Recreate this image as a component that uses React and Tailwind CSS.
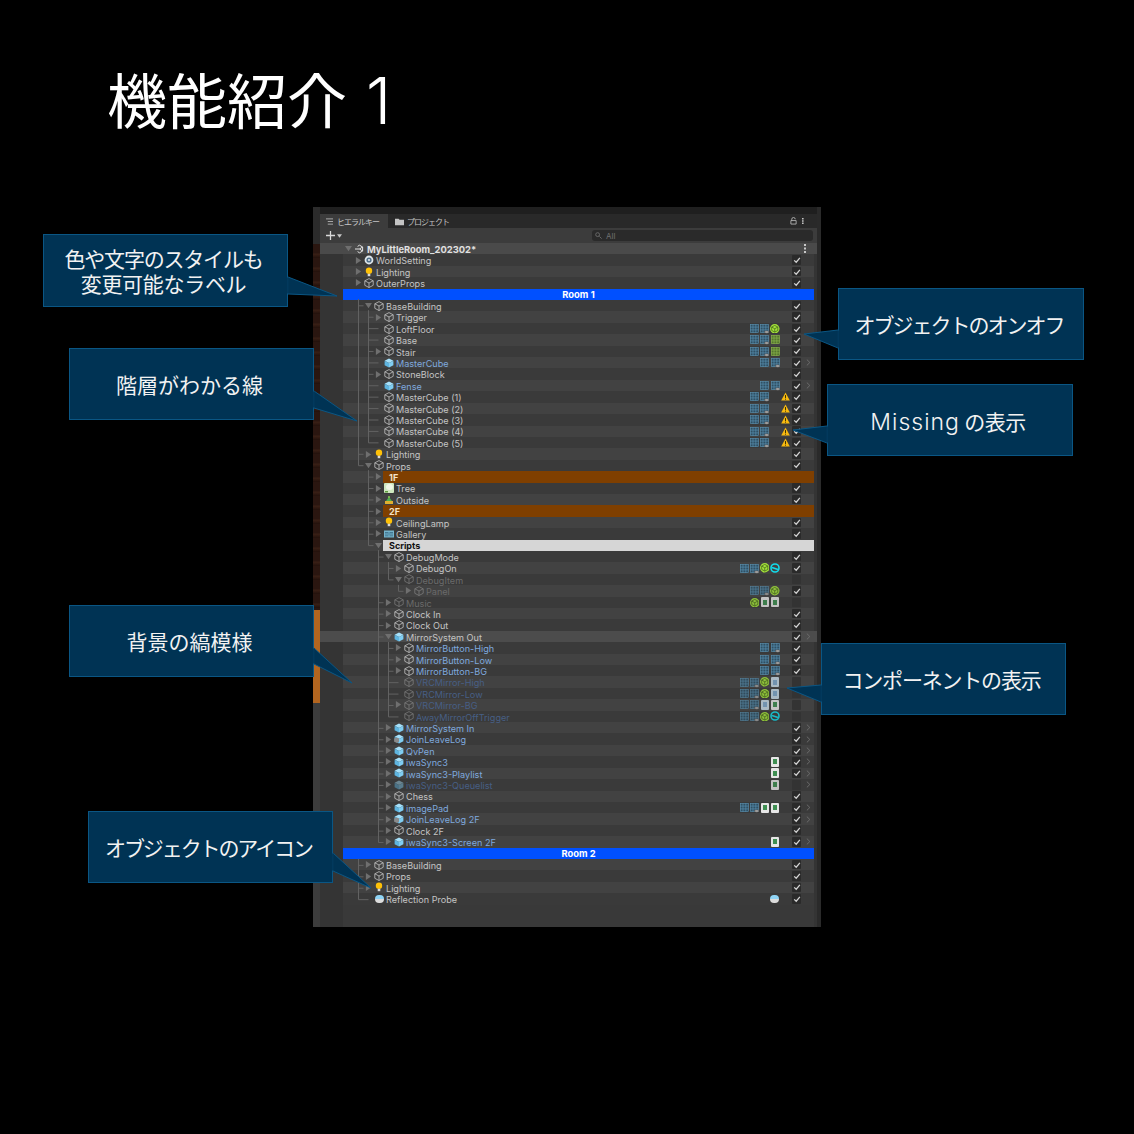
const ROW_H = 11.42;

// arrow: r = closed, d = open, undefined = leaf
const n = (depth, name, icon, arrow, extra = {}) => ({ depth, name, icon, arrow, check: "on", ...extra });

const mc = (label) => n(2, label, "cube", undefined, { tools: ["g", "e", ""], warn: true });

const rows = [
  n(-1, "MyLittleRoom_202302*", "scene", "d", { kind: "header", check: "none" }),
  n(0, "WorldSetting", "world", "r"),
  n(0, "Lighting", "bulb", "r"),
  n(0, "OuterProps", "cube", "r"),
  n(0, "Room 1", null, undefined, { kind: "room", check: "none" }),
  n(1, "BaseBuilding", "cube", "d"),
  n(2, "Trigger", "cube", "r"),
  n(2, "LoftFloor", "cube", undefined, { tools: ["g", "e", "c"] }),
  n(2, "Base", "cube", undefined, { tools: ["g", "e", "m"] }),
  n(2, "Stair", "cube", "r", { tools: ["g", "e", "m"] }),
  n(2, "MasterCube", "prefab", undefined, { tools: ["g", "e"], color: "blue", more: true }),
  n(2, "StoneBlock", "cube", "r"),
  n(2, "Fense", "prefab", undefined, { tools: ["g", "e"], color: "blue", more: true }),
  mc("MasterCube (1)"),
  mc("MasterCube (2)"),
  mc("MasterCube (3)"),
  mc("MasterCube (4)"),
  mc("MasterCube (5)"),
  n(1, "Lighting", "bulb", "r"),
  n(1, "Props", "cube", "d"),
  n(2, "1F", null, "r", { kind: "brown", check: "none" }),
  n(2, "Tree", "tree", "r"),
  n(2, "Outside", "outside", "r"),
  n(2, "2F", null, "r", { kind: "brown", check: "none" }),
  n(2, "CeilingLamp", "bulb", "r"),
  n(2, "Gallery", "gallery", "r"),
  n(2, "Scripts", null, "d", { kind: "white", check: "none" }),
  n(3, "DebugMode", "cube", "d"),
  n(4, "DebugOn", "cube", "r", { tools: ["g", "e", "c", "q"] }),
  n(4, "DebugItem", "cube", "d", { color: "dim", check: "off" }),
  n(5, "Panel", "cube", "r", { color: "dim", tools: ["g", "e", "c"] }),
  n(3, "Music", "cube", "r", { color: "dim", check: "off", tools: ["c", "d", "d"] }),
  n(3, "Clock In", "cube", "r"),
  n(3, "Clock Out", "cube", "r"),
  n(3, "MirrorSystem Out", "prefab", "d", { kind: "hover", more: true }),
  n(4, "MirrorButton-High", "cube", "r", { color: "blue", tools: ["g", "e"] }),
  n(4, "MirrorButton-Low", "cube", "r", { color: "blue", tools: ["g", "e"] }),
  n(4, "MirrorButton-BG", "cube", "r", { color: "blue", tools: ["g", "e"] }),
  n(4, "VRCMirror-High", "cube", undefined, { color: "dimblue", check: "off", tools: ["g", "e", "c", "b"] }),
  n(4, "VRCMirror-Low", "cube", undefined, { color: "dimblue", check: "off", tools: ["g", "e", "c", "b"] }),
  n(4, "VRCMirror-BG", "cube", "r", { color: "dimblue", check: "off", tools: ["g", "e", "b", "d"] }),
  n(4, "AwayMirrorOffTrigger", "cube", undefined, { color: "dimblue", check: "off", tools: ["g", "e", "c", "q"] }),
  n(3, "MirrorSystem In", "prefab", "r", { color: "blue", more: true }),
  n(3, "JoinLeaveLog", "mixed", "r", { color: "blue", more: true }),
  n(3, "QvPen", "prefab", "r", { color: "blue", more: true }),
  n(3, "iwaSync3", "prefab", "r", { color: "blue", tools: ["d"], more: true }),
  n(3, "iwaSync3-Playlist", "prefab", "r", { color: "blue", tools: ["d"], more: true }),
  n(3, "iwaSync3-Queuelist", "prefab", "r", { color: "dimblue", tools: ["d"], check: "off", more: true }),
  n(3, "Chess", "cube", "r"),
  n(3, "imagePad", "prefab", "r", { color: "blue", tools: ["g", "e", "d", "d"], more: true }),
  n(3, "JoinLeaveLog 2F", "mixed", "r", { color: "blue", more: true }),
  n(3, "Clock 2F", "cube", "r"),
  n(3, "iwaSync3-Screen 2F", "prefab", "r", { color: "blue", tools: ["d"], more: true }),
  n(0, "Room 2", null, undefined, { kind: "room", check: "none" }),
  n(1, "BaseBuilding", "cube", "r"),
  n(1, "Props", "cube", "r"),
  n(1, "Lighting", "bulb", "r"),
  n(1, "Reflection Probe", "probe", undefined, { tools: ["p"] }),
];

const textColors = {
  dim: "text-[#6a6a6a]",
  blue: "text-[#7fa9de]",
  dimblue: "text-[#475f85]",
};

function ObjectIcon({ type, dim }) {
  const cls = `w-[10px] h-[10px] ${dim ? "opacity-45" : ""}`;
  if (type === "cube")
    return (
      <svg viewBox="0 0 10 10" className={cls} fill="none" stroke="#c4c4c4" strokeWidth="0.8">
        <path d="M5 .6 9.2 2.8V7.3L5 9.5.8 7.3V2.8ZM.8 2.8 5 5l4.2-2.2M5 5v4.5" />
      </svg>
    );
  if (type === "prefab" || type === "mixed")
    return (
      <svg viewBox="0 0 10 10" className={cls}>
        <path d="M5 .5 9.4 2.8 5 5 .6 2.8Z" fill="#a5e0fa" />
        <path d="M.6 2.8 5 5v4.5L.6 7.3Z" fill="#5fb5e0" />
        <path d="M9.4 2.8 5 5v4.5l4.4-2.2Z" fill="#7fcdf2" />
        {type === "mixed" && <path d="M.2 4.6 3 3.4l2 1.2v3.2L3 9 .2 7.8Z" fill="#8a8a8a" />}
      </svg>
    );
  if (type === "bulb")
    return (
      <svg viewBox="0 0 10 10" className={cls}>
        <circle cx="5" cy="3.8" r="3.2" fill="#ffc107" />
        <rect x="3.7" y="6.8" width="2.6" height="2.4" fill="#d8d8d8" />
      </svg>
    );
  if (type === "world")
    return (
      <svg viewBox="0 0 10 10" className={cls}>
        <circle cx="5" cy="5" r="4.4" fill="#dfe6ea" />
        <circle cx="5" cy="5" r="2.6" fill="#4f6f8a" />
        <circle cx="5" cy="5" r="1.1" fill="#dfe6ea" />
      </svg>
    );
  if (type === "scene")
    return (
      <svg viewBox="0 0 10 10" className={cls} fill="none" stroke="#e4e4e4" strokeWidth="1">
        <path d="M5.5 1.2 8.6 3v4L5.5 8.8M5.5 5H1M5.5 5l3.1-2M5.5 5l3.1 2M3.6 2.4 5.5 1.2M3.6 7.6 5.5 8.8" />
      </svg>
    );
  if (type === "tree")
    return (
      <svg viewBox="0 0 10 10" className={cls}>
        <rect width="10" height="10" rx="1" fill="#cfe8c0" />
        <ellipse cx="5.5" cy="4" rx="3.5" ry="3" fill="#f0f7e8" />
        <rect x="1" y="8" width="3" height="1.5" fill="#5c9a3c" />
      </svg>
    );
  if (type === "outside")
    return (
      <svg viewBox="0 0 10 10" className={cls}>
        <rect x="1" y="6" width="8" height="3" fill="#e0b030" />
        <path d="M2 6 5 2l3 4Z" fill="#4caf50" />
        <circle cx="5" cy="2" r="1" fill="#8bd050" />
      </svg>
    );
  if (type === "gallery")
    return (
      <svg viewBox="0 0 10 10" className={cls}>
        <rect y="1.5" width="10" height="7" fill="#74b3cc" />
        <path d="M1 3.5h3.5M5.5 3.5H9M1 5h8M1 6.8h3.5M5.5 6.8H9" stroke="#2f5f78" strokeWidth="0.7" />
      </svg>
    );
  if (type === "probe") return <ProbeBall />;
  return null;
}

function ProbeBall() {
  return (
    <span className="block w-[9px] h-[8px] rounded-full overflow-hidden">
      <span className="block h-[4px] bg-[#8fd4f5]" />
      <span className="block h-[4px] bg-[#dcdcdc]" />
    </span>
  );
}

function ToolIcon({ type }) {
  if (type === "p") return <ProbeBall />;
  if (type === "g" || type === "e" || type === "m") {
    const line = type === "m" ? "#8fb84e" : "#5b93b3";
    const fill = type === "m" ? "#54752e" : "#2f5064";
    return (
      <svg viewBox="0 0 10 10" className="w-[8.8px] h-[9px] overflow-visible">
        <rect x=".4" y=".4" width="9.2" height="9.2" fill={fill} stroke={line} strokeWidth="0.7" />
        <path d="M3.4 0v10M6.6 0v10M0 3.4h10M0 6.6h10" stroke={line} strokeWidth="0.7" />
        {type === "e" && <ellipse cx="7.6" cy="9" rx="2.6" ry="1.4" fill="#a8a8a8" stroke="#333" strokeWidth="0.4" />}
      </svg>
    );
  }
  if (type === "c")
    return (
      <svg viewBox="0 0 10 10" className="w-[9.5px] h-[9.5px]">
        <circle cx="5" cy="5" r="5" fill="#a4e23a" />
        <path d="M5 1.5 8.2 3.2V6.8L5 8.5 1.8 6.8V3.2ZM1.8 3.2 5 5l3.2-1.8M5 5v3.5" fill="none" stroke="#44661a" strokeWidth="0.8" />
      </svg>
    );
  if (type === "q")
    return (
      <svg viewBox="0 0 10 10" className="w-[10px] h-[10px]" fill="none" stroke="#12dcec" strokeWidth="1.6">
        <circle cx="5" cy="5" r="4" />
        <path d="M2 4.6 8 6.4" />
      </svg>
    );
  if (type === "d" || type === "b")
    return (
      <span className={`flex items-center justify-center w-[8px] h-[10px] rounded-[1px] ${type === "d" ? "bg-[#e6e6e6]" : "bg-[#c4d8e6]"}`}>
        <span className={`block w-[4px] h-[5px] ${type === "d" ? "bg-[#3f8f52]" : "bg-[#7fa8cc]"}`} />
      </span>
    );
  return null;
}

function Warn() {
  return (
    <svg viewBox="0 0 10 10" className="w-[9px] h-[9px]">
      <path d="M5 .5 9.8 9.5H.2Z" fill="#f7b90f" />
      <path d="M5 3.4v3.2M5 7.4v1.1" stroke="#3a3000" strokeWidth="1.1" />
    </svg>
  );
}

function Check({ state }) {
  if (state === "none") return null;
  return (
    <span className={`flex items-center justify-center w-[9.5px] h-[9.5px] rounded-[1px] ${state === "on" ? "bg-[#2a2a2a]" : "bg-[#333333]"}`}>
      {state === "on" && (
        <svg viewBox="0 0 10 10" className="w-[8px] h-[8px]" fill="none" stroke="#d4d4d4" strokeWidth="1.6">
          <path d="M1.5 5.5 4 7.8 8.6 2.4" />
        </svg>
      )}
    </span>
  );
}

function Arrow({ dir }) {
  if (!dir) return null;
  return (
    <svg viewBox="0 0 8 8" className="w-[7px] h-[7px]" fill="#6f6f6f">
      {dir === "r" ? <path d="M1 0 7 4 1 8Z" /> : <path d="M0 1h8L4 7Z" />}
    </svg>
  );
}

function Row({ row, index }) {
  const stripe = index % 2 === 0 ? "bg-[#424242]" : "bg-[#3a3a3a]";
  const dim = row.color === "dim" || row.color === "dimblue";
  const padLeft = 10 + row.depth * 10;

  if (row.kind === "room") {
    return (
      <div className="flex" style={{ height: ROW_H }}>
        <div className="w-[23px]" />
        <div className="flex-1 mr-[3px] pt-px bg-[#0050ff] flex items-center justify-center text-white font-bold text-[9.4px]">
          {row.name}
        </div>
      </div>
    );
  }

  const isHeader = row.kind === "header";
  const isHover = row.kind === "hover";
  const band = isHeader ? "bg-[#4a4a4a]" : isHover ? "bg-[#4c4c4c]" : "";

  return (
    <div className={`flex ${band}`} style={{ height: ROW_H }}>
      <div className="w-[23px] shrink-0" />
      <div className={`flex-1 flex items-center min-w-0 ${band || stripe}`} style={{ paddingLeft: padLeft }}>
        <span className="w-[10px] h-full flex items-center justify-center shrink-0">
          <Arrow dir={row.arrow} />
        </span>
        {row.kind === "brown" || row.kind === "white" ? (
          <div
            className={`h-full flex-1 flex items-center pl-[6px] pt-px font-bold text-[9px] ${
              row.kind === "brown" ? "bg-[#7f3f00] text-[#f2e2c8]" : "bg-[#d6d6d6] text-[#111111]"
            }`}
          >
            {row.name}
          </div>
        ) : (
          <>
            <span className="w-[10px] ml-px h-full flex items-center justify-center shrink-0">
              <ObjectIcon type={row.icon} dim={dim} />
            </span>
            <span
              className={`relative z-10 ml-[2px] pt-[1.5px] whitespace-nowrap leading-none ${
                isHeader ? "ml-[3px] font-bold text-[9.4px] text-[#e0e0e0]" : `text-[9.1px] ${textColors[row.color] || "text-[#c4c4c4]"}`
              }`}
            >
              {row.name}
            </span>
            <div className="ml-auto flex items-center h-full shrink-0">
              <div className="flex items-center">
                {(row.tools || []).map((t, i) => (
                  <span key={i} className={`w-[10.2px] flex justify-center ${dim ? "opacity-80" : ""}`}>
                    <ToolIcon type={t} />
                  </span>
                ))}
              </div>
              <span className="w-[11px] flex justify-center">{row.warn && <Warn />}</span>
              <span className="w-[11px] flex justify-center">
                <Check state={row.check} />
              </span>
              <span className="w-[12px] flex justify-center">
                {row.more && (
                  <svg viewBox="0 0 6 8" className="w-[5px] h-[7px]" fill="none" stroke="#6e6e6e" strokeWidth="1.1">
                    <path d="M1 .5 4.6 4 1 7.5" />
                  </svg>
                )}
                {isHeader && (
                  <svg viewBox="0 0 3 9" className="w-[3px] h-[9px] -ml-[6px]" fill="#c8c8c8">
                    <rect y="0" width="2" height="2" />
                    <rect y="3.5" width="2" height="2" />
                    <rect y="7" width="2" height="2" />
                  </svg>
                )}
              </span>
            </div>
          </>
        )}
      </div>
      <div className="w-[3px] shrink-0" />
    </div>
  );
}

// hierarchy guide lines, derived from the row depths
function TreeLines() {
  const parts = [];
  rows.forEach((row, i) => {
    if (row.depth < 1) return;
    let p = i - 1;
    while (p >= 0 && rows[p].depth >= row.depth) p--;
    const x = 5.5 + row.depth * 10;
    const cy = (i + 0.5) * ROW_H;
    const py = (p + 0.5) * ROW_H + 5;
    const xEnd = row.arrow ? x + 5 : x + 10;
    parts.push(`M${x} ${py}V${cy}H${xEnd}`);
  });
  return (
    <svg className="absolute left-0 top-0 w-full h-full pointer-events-none" fill="none" stroke="#626262" strokeWidth="1">
      <path d={parts.join("")} transform="translate(23 0)" />
    </svg>
  );
}

function HierarchyPanel() {
  return (
    <div className="ml-[313px] mt-[77px] w-[508px] h-[720px] flex bg-[#262626]">
      {/* scene view peeking out on the left */}
      <div className="w-[7px] flex flex-col shrink-0">
        <div className="h-[37px] bg-[#2b2b2b]" />
        <div className="h-[366px] bg-[repeating-linear-gradient(180deg,#2a1610_0px,#2a1610_9px,#3a2016_10px,#22110c_14px)]" />
        <div className="h-[93px] bg-[#b2651f]" />
        <div className="flex-1 bg-[#3c3c3c]" />
      </div>
      <div className="flex-1 flex flex-col min-w-0">
        <div className="h-[7px] bg-[#1f1f1f]" />
        <div className="h-[14px] flex items-stretch bg-[#292929] text-[#c4c4c4] text-[8px] tracking-[-1px] font-['Noto_Sans_CJK_JP',sans-serif]">
          <div className="w-[68px] bg-[#3c3c3c] flex items-center pl-[6px] gap-[4px] pt-px">
            <svg viewBox="0 0 8 8" className="w-[7px] h-[7px]" stroke="#c4c4c4" strokeWidth="0.9">
              <path d="M0 1h8M2 4h6M2 7h6" />
            </svg>
            <span>ヒエラルキー</span>
          </div>
          <div className="flex items-center pl-[7px] gap-[3px] pt-px">
            <svg viewBox="0 0 10 8" className="w-[9px] h-[8px]" fill="#c4c4c4">
              <path d="M0 .5h4l1 1h5v6H0Z" />
            </svg>
            <span>プロジェクト</span>
          </div>
          <div className="ml-auto flex items-center gap-[5px] pr-[13px]">
            <svg viewBox="0 0 8 8" className="w-[7px] h-[8px]" fill="none" stroke="#c4c4c4" strokeWidth="0.9">
              <path d="M2 3.5V2a2 2 0 0 1 4 0M1 3.5h6v4H1Z" />
            </svg>
            <svg viewBox="0 0 3 9" className="w-[2px] h-[8px]" fill="#c4c4c4">
              <rect width="2.4" height="2.2" />
              <rect y="3.4" width="2.4" height="2.2" />
              <rect y="6.8" width="2.4" height="2.2" />
            </svg>
          </div>
        </div>
        <div className="h-[15px] flex items-center bg-[#3c3c3c] pl-[6px] pr-[4px]">
          <svg viewBox="0 0 10 10" className="w-[9px] h-[9px]" stroke="#d8d8d8" strokeWidth="1.4">
            <path d="M5 0v10M0 5h10" />
          </svg>
          <svg viewBox="0 0 6 4" className="w-[5px] h-[4px] ml-[2px]" fill="#c8c8c8">
            <path d="M0 0h6L3 4Z" />
          </svg>
          <div className="ml-auto w-[221px] h-[11px] rounded-[3px] bg-[#2a2a2a] flex items-center pl-[3px] gap-[3px] text-[8px] text-[#6f6f6f] font-['Inter',sans-serif]">
            <svg viewBox="0 0 8 8" className="w-[7px] h-[7px]" fill="none" stroke="#6f6f6f" strokeWidth="1">
              <circle cx="3" cy="3" r="2.2" />
              <path d="M5 5 7.6 7.6" />
            </svg>
            <span className="ml-px">All</span>
          </div>
        </div>
        <div className="flex-1 relative flex flex-col bg-[#343434] font-['Inter',sans-serif] overflow-hidden">
          {rows.map((row, i) => (
            <Row key={i} row={row} index={i} />
          ))}
          <div className="flex-1 ml-[23px] mr-[3px] bg-[#393939]" />
          <TreeLines />
        </div>
      </div>
      <div className="w-[4px] shrink-0 bg-[#2a2a2a]" />
    </div>
  );
}

function Callout({ box, tail, lines }) {
  const [x, y, w, h] = box;
  const [by1, by2, tipX, tipY] = tail;
  const baseX = tipX < x ? x : x + w;
  const minX = Math.min(x, tipX) - 2;
  const minY = Math.min(y, tipY) - 2;
  const maxX = Math.max(x + w, tipX) + 2;
  const maxY = Math.max(y + h, tipY) + 2;
  return (
    <>
      <div
        className="absolute flex flex-col items-center justify-center pr-[4px] bg-[#003354] border border-[#0a5684] text-[#f2f2f2] text-[21px] leading-[25px] font-['Noto_Sans_CJK_JP',sans-serif] whitespace-nowrap"
        style={{ left: x, top: y, width: w, height: h }}
      >
        {lines.map((l, i) => (
          <div key={i}>{l}</div>
        ))}
      </div>
      <svg
        className="absolute pointer-events-none"
        style={{ left: minX, top: minY, width: maxX - minX, height: maxY - minY }}
        viewBox={`${minX} ${minY} ${maxX - minX} ${maxY - minY}`}
      >
        <path d={`M${baseX} ${by1}L${tipX} ${tipY}L${baseX} ${by2}Z`} fill="#003354" stroke="#0a5684" strokeWidth="1" />
        <path d={`M${baseX} ${by1 + 0.5}V${by2 - 0.5}`} stroke="#003354" strokeWidth="1.6" />
      </svg>
    </>
  );
}

const callouts = [
  {
    box: [43, 234, 245, 73],
    tail: [277, 294, 337, 296],
    lines: [<span className="tracking-[-1.2px]">色や文字のスタイルも</span>, <span className="tracking-[-0.3px]">変更可能なラベル</span>],
  },
  { box: [69, 348, 245, 72], tail: [391, 408, 357, 421], lines: ["階層がわかる線"] },
  { box: [69, 605, 245, 72], tail: [648, 664, 352, 683], lines: ["背景の縞模様"] },
  { box: [88, 811, 245, 72], tail: [853, 871, 371, 888], lines: [<span className="tracking-[-2.1px]">オブジェクトのアイコン</span>] },
  { box: [838, 288, 246, 72], tail: [330, 348, 804, 334], lines: [<span className="tracking-[-2px]">オブジェクトのオンオフ</span>] },
  {
    box: [827, 384, 246, 72],
    tail: [426, 443, 793, 430],
    lines: [
      <span className="block pt-[3px] tracking-[-0.5px]">
        <span className="font-['Inter',sans-serif] text-[23px] font-light tracking-[1px]">Missing</span> の表示
      </span>,
    ],
  },
  { box: [821, 643, 245, 72], tail: [685, 702, 787, 688], lines: [<span className="tracking-[-1.2px]">コンポーネントの表示</span>] },
];

export default function App() {
  return (
    <div className="relative w-[1134px] h-[1134px] bg-black overflow-hidden">
      <h1 className="pl-[107px] pt-[54px] h-[130px] text-[60px] leading-[88px] font-normal text-white font-['Noto_Sans_CJK_JP',sans-serif] whitespace-nowrap">
        機能紹介<span className="ml-[19px] font-['Inter',sans-serif] text-[64px] font-light">1</span>
      </h1>
      <HierarchyPanel />
      {callouts.map((c) => (
        <Callout key={c.box.join()} {...c} />
      ))}
    </div>
  );
}
